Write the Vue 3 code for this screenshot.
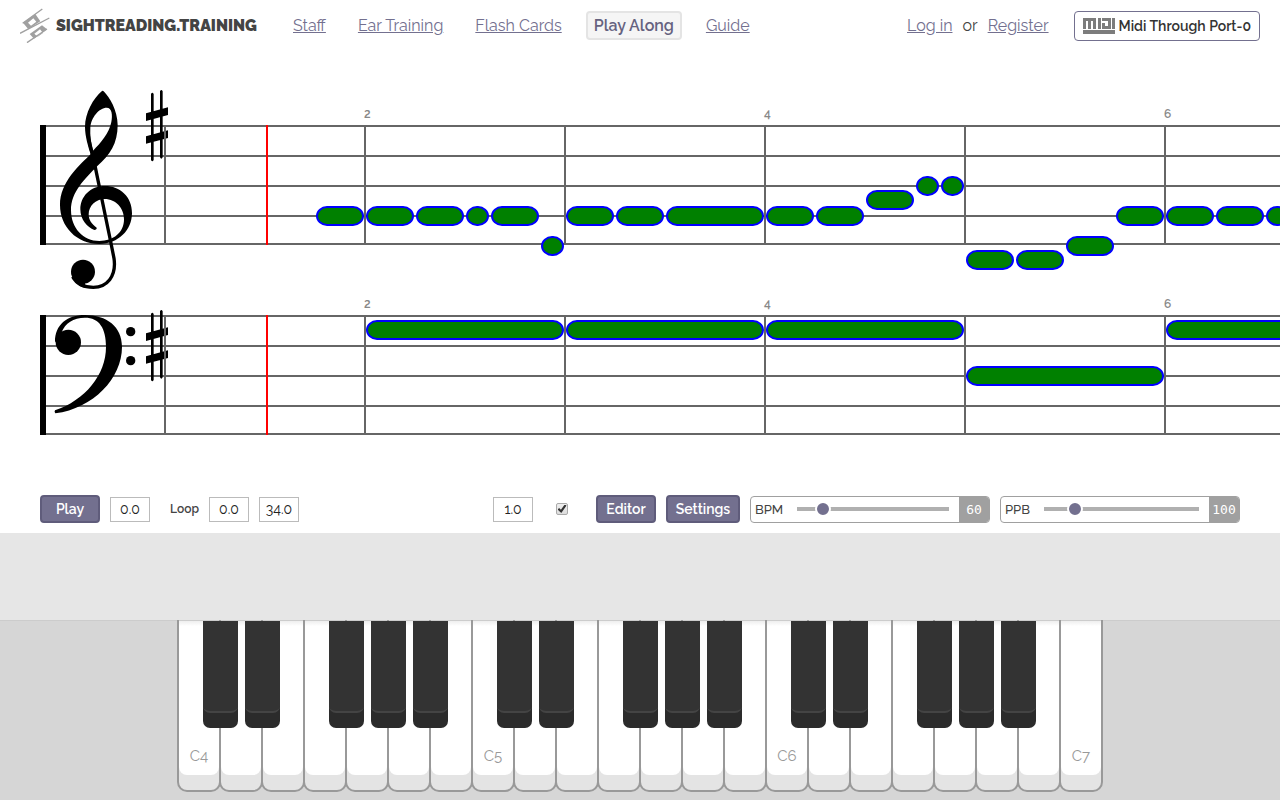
<script setup>
import { ref } from 'vue'

const links = ['Staff', 'Ear Training', 'Flash Cards', 'Play Along', 'Guide']
const active = 'Play Along'

// One beat is 50px wide; beat 0 sits on the playback cursor.
const BEAT = 50
const CURSOR = 226

// [beat, duration, vertical centre relative to the top staff line]
const treble = [
  [1, 1, 91], [2, 1, 91], [3, 1, 91], [4, 0.5, 91], [4.5, 1, 91], [5.5, 0.5, 121],
  [6, 1, 91], [7, 1, 91], [8, 2, 91], [10, 1, 91], [11, 1, 91], [12, 1, 75],
  [13, 0.5, 61], [13.5, 0.5, 61], [14, 1, 135], [15, 1, 135], [16, 1, 121],
  [17, 1, 91], [18, 1, 91], [19, 1, 91], [20, 0.5, 91], [20.5, 1, 91],
]
const bass = [[2, 4, 15], [6, 4, 15], [10, 4, 15], [14, 4, 61], [18, 4, 15]]

const staves = [
  { name: 'treble', notes: treble, sharpY: -35 },
  { name: 'bass', notes: bass, sharpY: -5 },
]
const lines = [0, 30, 60, 90, 118]
const bars = Array.from({ length: 6 }, (_, i) => ({ n: i + 1, x: 124 + i * 200 }))

const position = ref('0.0')
const loopStart = ref('0.0')
const loopEnd = ref('34.0')
const speed = ref('1.0')
const metronome = ref(true)
const bpm = ref(60)
const ppb = ref(100)

const whiteKeys = Array.from({ length: 22 }, (_, i) => ({
  id: i,
  label: i % 7 === 0 ? 'C' + (4 + i / 7) : '',
  sharp: i < 21 && ![2, 6].includes(i % 7),
}))
</script>

<template>
  <div class="page">
    <header class="header">
      <a class="logo" href="#">
        <svg class="mark" viewBox="0 0 90 105" aria-hidden="true">
          <path fill="none" stroke="#a0a0a0" stroke-width="4" d="M8 46L67 3M0 76L88 30M21 104L81 63" />
          <path fill="#a0a0a0" fill-rule="evenodd" d="M9 44L46 18L61 40L25 64Z M24 44L33 53L49 41L40 31Z M29 78L66 52L81 64L42 92Z M43 77L53 86L69 75L60 64Z" />
        </svg>
        <span>SIGHTREADING.TRAINING</span>
      </a>
      <nav class="nav">
        <a v-for="l in links" :key="l" href="#" :class="{ active: l === active }">{{ l }}</a>
      </nav>
      <div class="account">
        <a href="#">Log in</a><span>or</span><a href="#">Register</a>
      </div>
      <button class="midi" type="button">
        <svg viewBox="0 0 32 16" aria-hidden="true">
          <path fill="#7c7c7c" d="M0 0H13V11H10V3H8V11H5V3H3V11H0Z M15 0H18V11H15Z M19 0H28V11H19V5H22V8H25V3H19Z M29 0H32V11H29Z M0 12H32V16H0Z" />
        </svg>
        <span>Midi Through Port-0</span>
      </button>
    </header>

    <main class="staves">
      <svg v-for="s in staves" :key="s.name" class="staff" :aria-label="s.name + ' staff'">
        <rect width="6" height="120" fill="#000" />
        <rect v-for="y in lines" :key="y" x="6" :y="y" width="100%" height="2" fill="#666" />

        <svg v-if="s.name === 'treble'" x="-10" y="-45" width="260" height="220" viewBox="0 0 780 660">
          <path fill-rule="evenodd" d="M216 33C190 54 165 100 165 140C165 170 175 200 182 222C150 255 90 305 90 375C90 440 140 492 208 492C265 492 306 450 306 400C306 350 270 318 225 318C180 318 151 350 151 388C151 420 172 442 193 450Q201 449 200 443C185 432 176 420 176 403C176 378 197 357 224 357C258 357 282 385 282 418C282 458 250 483 208 483C160 483 123 445 123 390C123 335 165 297 202 258C240 225 263 190 263 135C263 90 237 50 223 36Q218 31 216 33Z M189 212C182 185 180 165 181 143C183 112 208 83 230 83C246 83 248 105 244 126C237 160 213 188 189 212Z" />
          <path fill="none" stroke="#000" stroke-width="10" d="M173 150C175 185 187 215 196 262L241 480L252 535C260 590 230 622 190 622C160 622 140 612 128 590" />
          <circle cx="159" cy="575" r="36" />
          <path d="M124 580Q134 618 165 624L165 605Z" />
        </svg>
        <svg v-else x="-10" y="-20" width="260" height="150" viewBox="0 0 780 450">
          <path d="M75 140C75 90 110 60 165 60C230 60 276 95 276 155C276 250 190 340 76 355Q72 351 75 346C165 315 228 240 228 155C228 100 208 68 165 68C130 68 105 85 95 112L115 142Z" />
          <circle cx="115" cy="142" r="38" />
          <circle cx="302" cy="110" r="14" />
          <circle cx="302" cy="197" r="14" />
        </svg>

        <svg x="106" :y="s.sharpY" width="22" height="72" viewBox="0 0 66 216">
          <path d="M15 12Q19 4 23 12V210Q19 218 15 210Z M42 4Q46 -4 50 4V202Q46 210 42 202Z M0 70L66 52V75L0 93Z M0 139L66 121V144L0 161Z" />
        </svg>

        <g v-for="b in bars" :key="b.n">
          <rect :x="b.x" y="1" width="2" height="118" fill="#666" />
          <text v-if="b.n % 2 === 0" class="num" :x="b.x" y="-7">{{ b.n }}</text>
        </g>
        <rect :x="CURSOR" width="2" height="120" fill="red" />
        <rect
          v-for="([beat, len, y], i) in s.notes" :key="i"
          class="note" :x="CURSOR + 1 + beat * BEAT" :y="y - 9" :width="len * BEAT - 4" height="18" rx="10"
        />
      </svg>
    </main>

    <section class="toolbar">
      <button class="btn play" type="button">Play</button>
      <input v-model="position" class="box" type="text" aria-label="Position">
      <label class="loop" for="loop-start">Loop</label>
      <input id="loop-start" v-model="loopStart" class="box" type="text">
      <input v-model="loopEnd" class="box" type="text" aria-label="Loop end">
      <input v-model="speed" class="box speed" type="text" aria-label="Speed">
      <input v-model="metronome" class="check" type="checkbox" aria-label="Metronome">
      <button class="btn" type="button">Editor</button>
      <button class="btn settings" type="button">Settings</button>
      <div class="slider">
        <label for="bpm">BPM</label>
        <input id="bpm" v-model="bpm" type="range" min="10" max="390">
        <output for="bpm">{{ bpm }}</output>
      </div>
      <div class="slider">
        <label for="ppb">PPB</label>
        <input id="ppb" v-model="ppb" type="range" min="50" max="350">
        <output for="ppb">{{ ppb }}</output>
      </div>
    </section>

    <div class="drawer"></div>
    <section class="keyboard" aria-label="Keyboard">
      <div v-for="k in whiteKeys" :key="k.id" class="key">
        <div class="face">{{ k.label }}</div>
        <div v-if="k.sharp" class="black"><div class="top"></div></div>
      </div>
    </section>
  </div>
</template>

<style>
body {
  margin: 0;
  background: #fff;
}
</style>

<style scoped>
.page {
  display: flex;
  flex-direction: column;
  min-height: 100vh;
  color: #444;
  font-family: Raleway, Lato, sans-serif;
  font-size: 16px;
  overflow: hidden;
}
.page * {
  box-sizing: border-box;
}
button,
input {
  font-family: inherit;
  margin: 0;
}

.header {
  display: flex;
  align-items: center;
  height: 51px;
  padding: 0 20px;
}
.logo {
  display: flex;
  align-items: center;
  gap: 6px;
  width: 265px;
  color: #444;
  font-size: 16px;
  font-weight: 900;
  text-decoration: none;
}
.mark {
  width: 30px;
  height: 35px;
}
.nav {
  display: flex;
  gap: 16px;
}
.nav a {
  padding: 2px 6px 1px;
  border: 2px solid transparent;
  line-height: 22px;
}
.nav a,
.account a {
  color: #73708f;
}
.nav a.active {
  border: 2px solid #e4e4e4;
  border-radius: 4px;
  background: #f5f5f5;
  color: #65627f;
  font-weight: 600;
  text-decoration: none;
}
.account {
  display: flex;
  gap: 10px;
  margin-left: auto;
  margin-right: 25px;
}
.midi {
  display: flex;
  align-items: center;
  gap: 4px;
  height: 30px;
  padding: 0 8px;
  border: 1px solid #73708f;
  border-radius: 4px;
  background: #fff;
  color: #333;
  font-size: 14px;
  font-weight: 600;
}
.midi svg {
  width: 32px;
  height: 16px;
}

.staves {
  flex: 1;
  padding: 74px 0 50px 40px;
}
.staff {
  display: block;
  width: 100%;
  height: 120px;
  overflow: visible;
}
.staff + .staff {
  margin-top: 70px;
}
.staff svg {
  overflow: visible;
}
.num {
  fill: #888;
  font-size: 12px;
  font-weight: 600;
}
.note {
  fill: green;
  stroke: blue;
  stroke-width: 2px;
}

.toolbar {
  display: flex;
  align-items: center;
  gap: 10px;
  height: 48px;
  padding: 0 40px;
}
.btn {
  width: 60px;
  height: 28px;
  padding: 0;
  border: 2px solid #5f5c7b;
  border-radius: 4px;
  background: #73708f;
  color: #fff;
  font-size: 14px;
  font-weight: 600;
}
.btn.settings {
  width: 74px;
}
.box {
  width: 40px;
  height: 25px;
  padding: 0;
  border: 1px solid #bbb;
  background: #fff;
  color: #222;
  font-size: 14px;
  text-align: center;
}
.speed {
  margin-left: auto;
}
.loop {
  width: 39px;
  padding-left: 10px;
  font-size: 12px;
  font-weight: 600;
}
.check {
  appearance: none;
  display: grid;
  place-items: center;
  width: 12px;
  height: 12px;
  margin: 0 18px 0 13px;
  border: 1px solid #aaa;
  border-radius: 2px;
  background: linear-gradient(#eee, #ddd);
}
.check:checked::before {
  content: '';
  width: 9px;
  height: 9px;
  background: #333;
  clip-path: polygon(0 55%, 18% 38%, 38% 58%, 80% 0, 100% 12%, 42% 95%);
}
.slider {
  display: flex;
  align-items: center;
  width: 240px;
  height: 27px;
  border: 1px solid #a0a0a0;
  border-radius: 4px;
  overflow: hidden;
}
.slider label {
  width: 46px;
  padding-left: 4px;
  font-size: 13px;
  font-weight: 500;
}
#ppb {
  margin-left: -3px;
}
.slider input {
  appearance: none;
  flex: 1;
  min-width: 0;
  height: 20px;
  margin-right: 10px;
  border-radius: 2px;
  background: linear-gradient(#b0b0b0, #b0b0b0) center / 100% 4px no-repeat;
}
.slider input::-webkit-slider-thumb {
  appearance: none;
  box-sizing: border-box;
  width: 16px;
  height: 16px;
  border: 2px solid #fff;
  border-radius: 50%;
  background: #73708f;
}
.slider output {
  width: 30px;
  background: #a0a0a0;
  color: #fff;
  font: 13px/27px "DejaVu Sans Mono", monospace;
  text-align: center;
}

.drawer {
  height: 87px;
  background: #e6e6e6;
}
.keyboard {
  display: flex;
  justify-content: center;
  height: 180px;
  background: #d6d6d6;
  box-shadow: inset 0 1px #ccc;
}
.key {
  position: relative;
  width: 44px;
  height: 172px;
  border: 2px solid #999;
  border-top: 0;
  border-radius: 0 0 10px 10px;
  background: #e4e4e4;
}
.key + .key {
  margin-left: -2px;
}
.face {
  height: 155px;
  padding-top: 127px;
  border-radius: 0 0 8px 8px;
  background: linear-gradient(#ccc 0, #ccc 1px, #eee 1px, #fff 6px);
  color: #999;
  font-size: 15px;
  line-height: 18px;
  text-align: center;
}
.black {
  position: absolute;
  z-index: 1;
  top: 1px;
  left: 24px;
  width: 35px;
  height: 107px;
  border-radius: 0 0 7px 7px;
  background: #2b2b2b;
}
.top {
  height: 92px;
  border-bottom: 2px solid #444;
  border-radius: 0 0 7px 7px;
  background: #333;
}
</style>
